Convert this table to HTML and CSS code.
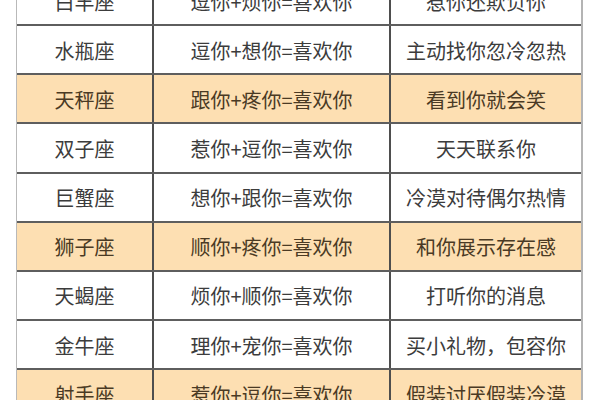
FILE: index.html
```html
<!DOCTYPE html>
<html lang="zh-CN">
<head>
<meta charset="utf-8">
<title>星座喜欢你的表现</title>
<link rel="stylesheet" href="styles.css">
</head>
<body>
<div class="sheet">
  <div class="row"><div class="cell sign">白羊座</div><div class="cell">逗你+烦你=喜欢你</div><div class="cell">惹你还欺负你</div></div>
  <div class="row"><div class="cell sign">水瓶座</div><div class="cell">逗你+想你=喜欢你</div><div class="cell">主动找你忽冷忽热</div></div>
  <div class="row hl"><div class="cell sign">天秤座</div><div class="cell">跟你+疼你=喜欢你</div><div class="cell">看到你就会笑</div></div>
  <div class="row"><div class="cell sign">双子座</div><div class="cell">惹你+逗你=喜欢你</div><div class="cell">天天联系你</div></div>
  <div class="row"><div class="cell sign">巨蟹座</div><div class="cell">想你+跟你=喜欢你</div><div class="cell">冷漠对待偶尔热情</div></div>
  <div class="row hl"><div class="cell sign">狮子座</div><div class="cell">顺你+疼你=喜欢你</div><div class="cell">和你展示存在感</div></div>
  <div class="row"><div class="cell sign">天蝎座</div><div class="cell">烦你+顺你=喜欢你</div><div class="cell">打听你的消息</div></div>
  <div class="row"><div class="cell sign">金牛座</div><div class="cell">理你+宠你=喜欢你</div><div class="cell">买小礼物，包容你</div></div>
  <div class="row hl"><div class="cell sign">射手座</div><div class="cell">惹你+逗你=喜欢你</div><div class="cell">假装讨厌假装冷漠</div></div>
</div>
</body>
</html>
```

FILE: styles.css
```css
html, body {
  margin: 0;
  padding: 0;
  background: #ffffff;
  overflow: hidden;
}

.sheet {
  margin: -23px 0 0 16px;
  width: 567px;
  border-left: 1px solid #b9b9b9;
  border-right: 2px solid #b4b4b4;
  box-sizing: border-box;
  font-family: "Noto Sans CJK SC", "Noto Sans", sans-serif;
  font-size: 20px;
  color: #3c3c3c;
}

.row {
  display: grid;
  grid-template-columns: 135px 237px 1fr;
  height: 49.15px;
  box-sizing: border-box;
  border-bottom: 2px solid #5e5e5e;
  background: #ffffff;
}

.row.hl {
  background: #fddfb2;
  color: #4a3a24;
}

.cell {
  display: flex;
  align-items: center;
  justify-content: center;
  padding-top: 1px;
}

.cell + .cell {
  border-left: 2px solid #4e4e4e;
}
```
